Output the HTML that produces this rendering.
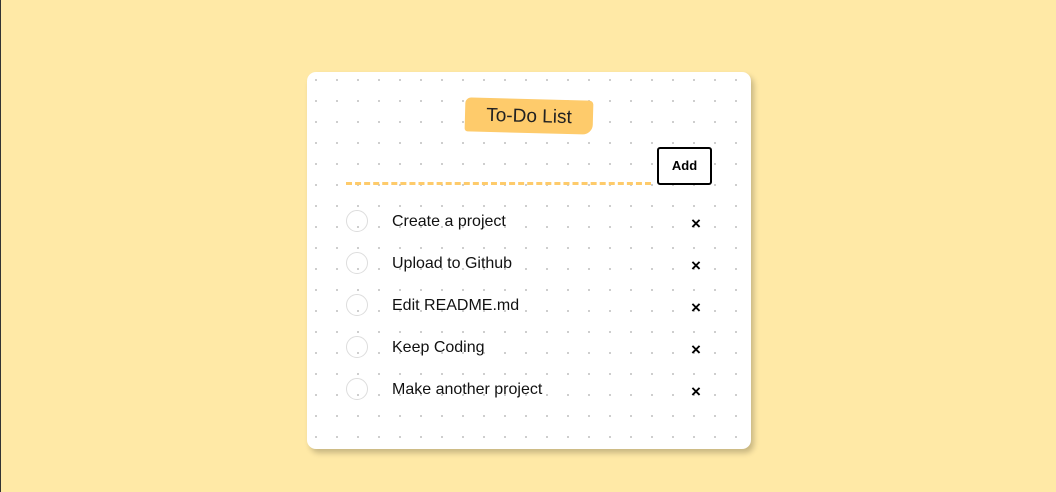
<!DOCTYPE html>
<html><head><style>
html,body{margin:0;padding:0;}
body{width:1056px;height:492px;background:#ffe9a6;position:relative;overflow:hidden;font-family:"Liberation Sans",sans-serif;border-left:1px solid #333;box-sizing:border-box;}
.card{position:absolute;left:306px;top:72px;width:444px;height:377px;background-color:#fff;border-radius:9px;box-shadow:3px 4px 6px rgba(0,0,0,0.22);
background-image:radial-gradient(circle,#c4c4c4 0.8px,transparent 1.2px);background-size:21px 21px;background-position:-1.5px -2.5px;}
.title{position:absolute;left:158px;top:27px;width:128px;height:34px;background:#fecb6b;border-radius:6px 4px 10px 3px;transform:rotate(1.5deg);font-size:19px;color:#222;text-align:center;line-height:36px;}
.line{position:absolute;left:39px;top:110px;width:305px;height:0;border-top:3px dashed #fecb6b;}
.add{position:absolute;left:350px;top:75px;width:51px;height:34px;border:2px solid #000;border-radius:3px;background:#fff;font-weight:bold;font-size:13px;text-align:center;line-height:34px;}
.row{position:absolute;left:0;width:444px;height:30px;}
.c{position:absolute;left:39px;top:4px;width:20px;height:20px;border:1.5px solid #ddd;border-radius:50%;}
.t{position:absolute;left:85px;top:7px;font-size:16px;color:#111;}
.x{position:absolute;left:384px;top:8px;font-size:17px;font-weight:bold;}
</style></head><body>
<div class="card">
<div class="title">To-Do List</div>
<div class="add">Add</div>
<div class="line"></div>
<div class="row" style="top:134px"><div class="c"></div><div class="t">Create a project</div><div class="x">×</div></div>
<div class="row" style="top:176px"><div class="c"></div><div class="t">Upload to Github</div><div class="x">×</div></div>
<div class="row" style="top:218px"><div class="c"></div><div class="t">Edit README.md</div><div class="x">×</div></div>
<div class="row" style="top:260px"><div class="c"></div><div class="t">Keep Coding</div><div class="x">×</div></div>
<div class="row" style="top:302px"><div class="c"></div><div class="t">Make another project</div><div class="x">×</div></div>
</div>
</body></html>
